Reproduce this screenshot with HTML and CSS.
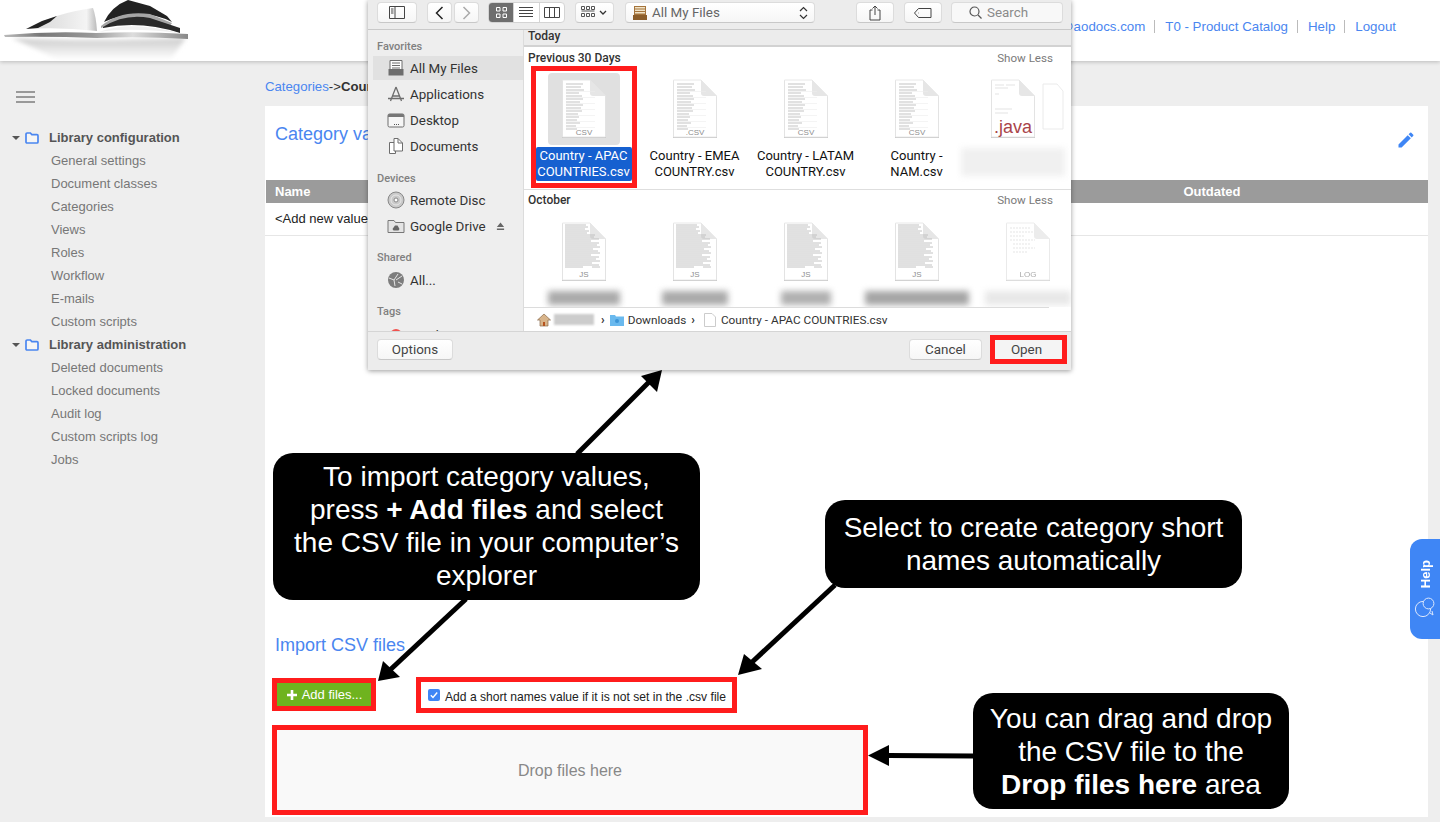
FILE: index.html
```html
<!DOCTYPE html>
<html lang="en">
<head>
<meta charset="utf-8">
<title>Import CSV files</title>
<link rel="stylesheet" href="styles.css">
</head>
<body>
<svg class="defs" width="0" height="0" aria-hidden="true">
  <defs>
    <symbol id="doc" viewBox="0 0 46 59">
      <path d="M1 2H29L45 18V59H1Z" fill="#c9c9c9"/>
      <path d="M1.500 1H29L44.500 17V58H1.500Z" fill="#fff" stroke="#e2e2e2" stroke-width=".8"/>
      <path d="M29 1L45 17H32Q29 17 29 14Z" fill="#e6e6e6"/>
    </symbol>
    <symbol id="lines-csv" viewBox="0 0 46 59">
      <path d="M5 5H22M5 8H20M5 11H23M5 14H18M5 17H21M5 20H22M5 23H19M5 26H22M5 29H20M5 32H21M5 35H17M5 38H18M5 41H16M5 44H19M5 47H15M5 50H16" stroke="#b4b4b4" stroke-width=".8"/>
      <path d="M5 12.500H34M5 18.500H34M5 24.500H34M5 30.500H34M5 36.500H34M5 42.500H34M5 48.500H34" stroke="#ececec" stroke-width=".6"/>
    </symbol>
    <symbol id="lines-js" viewBox="0 0 46 59">
      <path d="M4 3H25M4 5H27M4 7H24M4 9H28M4 11H26M4 13H34M4 15H33M4 17H38M4 19H30M4 21H38M4 23H36M4 25H39M4 27H32M4 29H37M4 31H39M4 33H30M4 35H38M4 37H35M4 39H39M4 41H31M4 43H38M4 45H22M31 45H39" stroke="#bbb" stroke-width=".9"/>
    </symbol>
    <symbol id="folder" viewBox="0 0 14 12">
      <path d="M1 2.200Q1 1 2.200 1H5.400L6.800 2.600H12Q13 2.600 13 3.700V10Q13 11 12 11H2Q1 11 1 10Z" fill="#fff" fill-opacity=".4" stroke="#4a86f0" stroke-width="1.700"/>
    </symbol>
  </defs>
</svg>

<header class="topbar">
  <svg class="logo" viewBox="0 0 190 61" aria-hidden="true">
    <defs>
      <linearGradient id="lp" x1="0" y1="0" x2="1" y2="0"><stop offset="0" stop-color="#d8d8d8"/><stop offset=".5" stop-color="#e6e6e6"/><stop offset=".85" stop-color="#f4f4f4"/><stop offset="1" stop-color="#bbb"/></linearGradient>
      <linearGradient id="bs" x1="0" y1="0" x2="1" y2="0"><stop offset="0" stop-color="#bbb"/><stop offset=".2" stop-color="#777"/><stop offset=".48" stop-color="#999"/><stop offset=".7" stop-color="#ddd"/><stop offset="1" stop-color="#888"/></linearGradient>
      <linearGradient id="rf" x1="0" y1="0" x2="0" y2="1"><stop offset="0" stop-color="#ccc"/><stop offset="1" stop-color="#fff"/></linearGradient>
      <filter id="soft"><feGaussianBlur stdDeviation=".5"/></filter>
      <filter id="softer"><feGaussianBlur stdDeviation="2"/></filter>
    </defs>
    <path d="M12 38Q90 42 186 38L170 60H60Z" fill="url(#rf)" filter="url(#softer)"/>
    <g filter="url(#soft)">
      <path d="M27 29Q55 13 93 8Q96 16 97 31Q60 27 27 29Z" fill="url(#lp)"/>
      <path d="M26 29L42 21L57 16L50 22L38 28Z" fill="#222"/>
      <path d="M104 22Q112 6 128 0L150 6L167 16L172 22Q140 6 104 22Z" fill="#222"/>
      <path d="M101 26Q120 10 150 14L172 23L170 26Q135 12 101 28Z" fill="#a5a5a5"/>
      <path d="M103 27Q125 13 150 18L180 28L180 33Q140 20 103 28Z" fill="#2a2a2a"/>
      <path d="M99 32Q130 20 179 33Q130 27 99 32Z" fill="#f0f0f0"/>
      <path d="M4 35Q50 31 96 33Q140 31 188 34L188 39Q140 36 97 38Q50 36 5 37Z" fill="url(#bs)"/>
    </g>
  </svg>
  <nav class="toplinks">
    <a>someone@aodocs.com</a><i></i><a>T0 - Product Catalog</a><i></i><a>Help</a><i></i><a>Logout</a>
  </nav>
</header>

<div class="layout">
  <aside class="sidebar">
    <div class="burger"><b></b><b></b><b></b></div>
    <div class="treehead"><span class="caret"></span><svg class="tfolder"><use href="#folder"/></svg><strong>Library configuration</strong></div>
    <a class="treeitem">General settings</a>
    <a class="treeitem">Document classes</a>
    <a class="treeitem">Categories</a>
    <a class="treeitem">Views</a>
    <a class="treeitem">Roles</a>
    <a class="treeitem">Workflow</a>
    <a class="treeitem">E-mails</a>
    <a class="treeitem">Custom scripts</a>
    <div class="treehead"><span class="caret"></span><svg class="tfolder"><use href="#folder"/></svg><strong>Library administration</strong></div>
    <a class="treeitem">Deleted documents</a>
    <a class="treeitem">Locked documents</a>
    <a class="treeitem">Audit log</a>
    <a class="treeitem">Custom scripts log</a>
    <a class="treeitem">Jobs</a>
  </aside>

  <main class="content">
    <div class="crumbs"><a>Categories</a>-&gt;<strong>Country</strong></div>
    <section class="card">
      <div class="cardhead">
        <h2 class="blue-title">Category values</h2>
        <svg class="pen" viewBox="0 0 24 24" aria-hidden="true"><path d="M3 17.250V21h3.750L17.810 9.940l-3.750-3.750L3 17.250zM20.710 7.040a1 1 0 0 0 0-1.410l-2.340-2.340a1 1 0 0 0-1.410 0l-1.830 1.830 3.750 3.750 1.830-1.830z"/></svg>
      </div>
      <div class="thead"><span>Name</span><span class="th-out">Outdated</span></div>
      <div class="trow">&lt;Add new value&gt;</div>

      <div class="importer">
        <h2 class="blue-title import-title">Import CSV files</h2>
        <div class="actions">
          <div class="redbox addwrap"><button class="addbtn"><svg viewBox="0 0 12 12" aria-hidden="true"><path d="M6 1V11M1 6H11" stroke="#fff" stroke-width="2.600"/></svg>Add files...</button></div>
          <label class="redbox checkwrap"><span class="check"><svg viewBox="0 0 12 12" aria-hidden="true"><path d="M2.800 6.200L5 8.500L9.200 3.500" fill="none" stroke="#fff" stroke-width="1.400"/></svg></span><span>Add a short names value if it is not set in the .csv file</span></label>
        </div>
        <div class="redbox dropzone">Drop files here</div>
      </div>
    </section>
  </main>
</div>

<div class="helptab">
  <span>Help</span>
  <svg viewBox="0 0 22 22" aria-hidden="true"><circle cx="9" cy="13" r="7.600" fill="none" stroke="#dce8fd" stroke-width="1"/><circle cx="14.500" cy="7.500" r="5.400" fill="#3f86f5" stroke="#dce8fd" stroke-width="1"/><path d="M16 17l3 2-1-4" fill="none" stroke="#dce8fd" stroke-width="1"/></svg>
</div>

<!-- macOS file picker -->
<div class="dialog">
  <div class="mac-toolbar">
    <button class="mbtn w40"><svg width="16" height="13" viewBox="0 0 16 13"><path d="M.5.5h15v12H.5zM6 .5v12M2 3h2.500M2 5h2.500M2 7h2.500" fill="none" stroke="#444"/></svg></button>
    <button class="mbtn w25 ml10"><svg width="9" height="14" viewBox="0 0 9 14"><path d="M7.500 1L1.500 7L7.500 13" fill="none" stroke="#222" stroke-width="1.500"/></svg></button>
    <button class="mbtn w25 ml2"><svg width="9" height="14" viewBox="0 0 9 14"><path d="M1.500 1L7.500 7L1.500 13" fill="none" stroke="#aaa" stroke-width="1.500"/></svg></button>
    <div class="seg ml9">
      <span class="on"><svg width="11" height="11" viewBox="0 0 11 11"><path d="M.5.5h3.500v3.500H.5zM7 .5h3.500v3.500H7zM.5 7h3.500v3.500H.5zM7 7h3.500v3.500H7z" fill="none" stroke="#fff"/></svg></span>
      <span><svg width="14" height="11" viewBox="0 0 14 11"><path d="M0 .5h14M0 3.500h14M0 6.500h14M0 9.500h14" stroke="#444"/></svg></span>
      <span><svg width="16" height="11" viewBox="0 0 16 11"><path d="M.5.5h15v10H.5zM5.500.5v10M10.500.5v10" fill="none" stroke="#444"/></svg></span>
    </div>
    <button class="mbtn w39 ml10"><svg width="27" height="13" viewBox="0 0 27 13"><path d="M.5.5h3v3h-3zM5.500.5h3v3h-3zM10.500.5h3v3h-3zM.5 5h13M.5 7.500h3v3h-3zM5.500 7.500h3v3h-3zM10.500 7.500h3v3h-3z" fill="none" stroke="#555"/><path d="M19 5l3 3 3-3" fill="none" stroke="#333" stroke-width="1.300"/></svg></button>
    <button class="mbtn popup ml11">
      <svg width="16" height="16" viewBox="0 0 16 16"><path d="M2 1h12v11H2z" fill="#a5743c"/><path d="M3 2h10v1.500H3zM3 4.500h10v1.500H3zM3 7h10v1.500H3z" fill="#f1e4c8"/><path d="M1 10h14v5H1z" fill="#8b5d2a"/></svg>
      <span>All My Files</span>
      <svg class="updown" width="9" height="14" viewBox="0 0 9 14"><path d="M1 5l3.500-3.500L8 5M1 9l3.500 3.500L8 9" fill="none" stroke="#333" stroke-width="1.200"/></svg>
    </button>
    <button class="mbtn w38 ml41"><svg width="12" height="16" viewBox="0 0 12 16"><path d="M3.500 5H1v10h10V5H8.500M6 10V1M3.500 3.500L6 1l2.500 2.500" fill="none" stroke="#444"/></svg></button>
    <button class="mbtn w38 ml10"><svg width="18" height="10" viewBox="0 0 18 10"><path d="M4.500.5H17v9H4.500L.5 5zM4 5h.5" fill="none" stroke="#444"/></svg></button>
    <div class="search ml9"><svg width="13" height="13" viewBox="0 0 13 13"><circle cx="5.500" cy="5.500" r="4.500" fill="none" stroke="#555" stroke-width="1.200"/><path d="M9 9l3.500 3.500" stroke="#555" stroke-width="1.200"/></svg><span>Search</span></div>
  </div>

  <div class="mac-body">
    <nav class="mac-side">
      <div class="sidehead first">Favorites</div>
      <div class="sideitem selected"><svg viewBox="0 0 18 18"><path d="M3 1.500h12v9H3z" fill="#fff" stroke="#6d6d6d"/><path d="M5 4h8M5 6.500h8M5 9h8" stroke="#6d6d6d"/><path d="M1.500 10h15v6.500h-15z" fill="#6d6d6d"/></svg>All My Files</div>
      <div class="sideitem"><svg viewBox="0 0 18 18"><path d="M9 2L3.500 16M9 2L14.500 16M5 11h8M1 13.500h16" fill="none" stroke="#6d6d6d" stroke-width="1.300"/></svg>Applications</div>
      <div class="sideitem"><svg viewBox="0 0 18 18"><rect x="1" y="3" width="16" height="13" rx="1.500" fill="#f6f6f6" stroke="#6d6d6d"/><path d="M1 4.500Q1 3 2.500 3h13Q17 3 17 4.500V6H1z" fill="#777"/><path d="M7 13.500h1M9 13.500h1M11 13.500h1" stroke="#555"/></svg>Desktop</div>
      <div class="sideitem"><svg viewBox="0 0 18 18"><path d="M2.500 5.500h6v11h-6z" fill="#fff" stroke="#6d6d6d"/><path d="M7 1.500h4l4.500 4.500v8H7z" fill="#fff" stroke="#6d6d6d"/><path d="M11 1.500V6h4.500" fill="none" stroke="#6d6d6d"/></svg>Documents</div>
      <div class="sidehead devices">Devices</div>
      <div class="sideitem"><svg viewBox="0 0 18 18"><circle cx="9" cy="9" r="8" fill="#c9c9c9" stroke="#888"/><circle cx="9" cy="9" r="5" fill="none" stroke="#e8e8e8"/><circle cx="9" cy="9" r="2" fill="#fff" stroke="#888"/></svg>Remote Disc</div>
      <div class="sideitem drive"><svg viewBox="0 0 18 18"><path d="M1 3.500h6l1.500 2H17v10H1z" fill="#e4e4e4" stroke="#777"/><path d="M8 8.500h2.500l2 3.500-1 1.500H6.500l-1-1.500z" fill="#666"/></svg>Google Drive<svg class="eject" viewBox="0 0 10 9"><path d="M5 0l4 5H1zM1 6.800h8V8.500H1z" fill="#666"/></svg></div>
      <div class="sidehead shared">Shared</div>
      <div class="sideitem"><svg viewBox="0 0 18 18"><circle cx="9" cy="9" r="8" fill="#7d7d7d"/><path d="M2 7l5 2 1 6M9 9l6-4M7 9l4-6M11 11l4 2" fill="none" stroke="#e5e5e5"/></svg>All...</div>
      <div class="sidehead tags">Tags</div>
      <div class="sideitem tagred"><span class="dot"></span>Red</div>
    </nav>

    <div class="mac-main">
      <div class="strip">Today</div>
      <div class="files">
        <section class="group g1">
          <div class="grouphead"><span>Previous 30 Days</span><em>Show Less</em></div>
          <div class="grid">
            <figure class="file sel">
              <div class="tile"><svg class="docicon"><use href="#doc"/><use href="#lines-csv"/><text x="23" y="56">CSV</text></svg></div>
              <figcaption>Country - APAC COUNTRIES.csv</figcaption>
            </figure>
            <figure class="file">
              <div class="tile"><svg class="docicon"><use href="#doc"/><use href="#lines-csv"/><text x="23" y="56">.CSV</text></svg></div>
              <figcaption>Country - EMEA COUNTRY.csv</figcaption>
            </figure>
            <figure class="file">
              <div class="tile"><svg class="docicon"><use href="#doc"/><use href="#lines-csv"/><text x="23" y="56">CSV</text></svg></div>
              <figcaption>Country - LATAM COUNTRY.csv</figcaption>
            </figure>
            <figure class="file">
              <div class="tile"><svg class="docicon"><use href="#doc"/><use href="#lines-csv"/><text x="23" y="56">CSV</text></svg></div>
              <figcaption class="narrow">Country - NAM.csv</figcaption>
            </figure>
            <figure class="file">
              <div class="tile javatile">
                <svg class="docicon ghost" viewBox="0 0 46 59"><path d="M2 5H16L22 12V50H2Z" fill="#fff" stroke="#e6e6e6"/></svg>
                <svg class="docicon"><use href="#doc"/><path d="M5 6H14M5 9H18M16 6H25M5 15H9M5 30H22M5 34H18" stroke="#e3e3e3"/><text class="java" x="23" y="54">.java</text></svg>
              </div>
              <div class="blurred b-java"></div>
            </figure>
          </div>
        </section>
        <section class="group g2">
          <div class="grouphead"><span>October</span><em>Show Less</em></div>
          <div class="grid">
            <figure class="file"><div class="tile t2"><svg class="docicon"><use href="#doc"/><use href="#lines-js"/><text x="23" y="55">JS</text></svg></div><div class="blurred b1"></div></figure>
            <figure class="file"><div class="tile t2"><svg class="docicon"><use href="#doc"/><use href="#lines-js"/><text x="23" y="55">JS</text></svg></div><div class="blurred b2"></div></figure>
            <figure class="file"><div class="tile t2"><svg class="docicon"><use href="#doc"/><use href="#lines-js"/><text x="23" y="55">JS</text></svg></div><div class="blurred b3"></div></figure>
            <figure class="file"><div class="tile t2"><svg class="docicon"><use href="#doc"/><use href="#lines-js"/><text x="23" y="55">JS</text></svg></div><div class="blurred b4"></div></figure>
            <figure class="file"><div class="tile t2"><svg class="docicon faint"><use href="#doc"/><path d="M5 6H25M5 10H28M5 14H20M5 18H30M8 22H25M8 26H30M8 30H22" stroke="#ddd" stroke-dasharray="2 1"/><text x="23" y="55">LOG</text></svg></div><div class="blurred b5"></div></figure>
          </div>
        </section>
      </div>
      <div class="pathbar">
        <svg width="14" height="14" viewBox="0 0 14 14"><path d="M7 1L.5 7H3v6h8V7h2.500z" fill="#d8b48a" stroke="#8a6a4a" stroke-width=".7"/><path d="M6 9h2v4H6z" fill="#b5531f"/></svg>
        <span class="blurname"></span>
        <span class="chev">›</span>
        <svg class="pfolder" width="14" height="12" viewBox="0 0 14 12"><path d="M0 1h5l1 1.500h8V12H0z" fill="#6ab9ee"/><circle cx="7" cy="7" r="2" fill="#3d95d6"/></svg>
        <span>Downloads</span>
        <span class="chev">›</span>
        <svg class="pdoc" width="12" height="14" viewBox="0 0 12 14"><path d="M.5.500H8L11.500 4V13.500H.5z" fill="#fff" stroke="#ccc"/></svg>
        <span>Country - APAC COUNTRIES.csv</span>
      </div>
    </div>
  </div>

  <div class="mac-foot">
    <button class="mbtn options">Options</button>
    <button class="mbtn cancel">Cancel</button>
    <button class="mbtn open">Open</button>
  </div>
  <div class="redbox fileflag"></div>
  <div class="redbox openflag"></div>
</div>

<!-- annotations -->
<svg class="arrows" viewBox="0 0 1440 822" aria-hidden="true">
  <g stroke="#000" stroke-width="5" fill="#000">
    <path d="M577 454L650 381"/>
    <path d="M662 370L641 376L657 392Z" stroke="none"/>
    <path d="M466 599L390 670"/>
    <path d="M378 681L383 661L400 677Z" stroke="none"/>
    <path d="M835 585L750 664"/>
    <path d="M738 675L744 654L762 669Z" stroke="none"/>
    <path d="M973 756L888 755.500"/>
    <path d="M868 755.500L889 745L889 766Z" stroke="none"/>
  </g>
</svg>
<div class="callout c1"><p>To import category values,<br>press <b>+ Add files</b> and select<br>the CSV file in your computer’s<br>explorer</p></div>
<div class="callout c2"><p>Select to create category short<br>names automatically</p></div>
<div class="callout c3"><p>You can drag and drop<br>the CSV file to the<br><b>Drop files here</b> area</p></div>
</body>
</html>
```
FILE: styles.css
```css
* { box-sizing: border-box; }
html, body { margin: 0; height: 100%; }
body {
  position: relative;
  width: 1440px;
  height: 822px;
  overflow: hidden;
  background: #eeeeee;
  font-family: "Liberation Sans", Arial, sans-serif;
  font-size: 13px;
  color: #222;
  display: flex;
  flex-direction: column;
}
.defs { position: absolute; }
a { color: #4a86f0; text-decoration: none; }

/* header */
.topbar {
  flex: none;
  height: 61px;
  background: #fff;
  box-shadow: 0 1px 4px rgba(0,0,0,.22);
  display: flex;
  justify-content: space-between;
  position: relative;
  z-index: 1;
}
.logo { width: 190px; height: 61px; }
.toplinks {
  display: flex;
  align-items: center;
  height: 52px;
  padding-right: 44px;
  font-size: 13.3px;
}
.toplinks i {
  width: 1px;
  height: 13px;
  margin: 0 10px 0 9px;
  background: #bbb;
}

/* layout */
.layout { flex: 1; display: flex; min-height: 0; }
.sidebar { width: 265px; flex: none; padding-top: 30px; }
.burger { margin-left: 16px; width: 19px; height: 12px; display: flex; flex-direction: column; justify-content: space-between; margin-bottom: 23px; }
.burger b { display: block; height: 2px; background: #999; }
.treehead { display: flex; align-items: center; height: 23px; color: #555; }
.treehead strong { font-size: 13px; margin-left: 10px; }
.caret { margin-left: 12px; width: 0; height: 0; border: 4px solid transparent; border-top: 4px solid #555; border-bottom: 0; }
.tfolder { width: 14px; height: 12px; margin-left: 5px; }
.treeitem { display: block; height: 23px; line-height: 23px; margin-left: 51px; color: #777; }

/* main */
.content { flex: 1; padding-right: 12px; display: flex; flex-direction: column; min-width: 0; }
.crumbs { height: 45px; padding-top: 18px; line-height: 16px; color: #333; font-size: 13.2px; }
.card { flex: 1; margin-bottom: 5px; background: #fff; display: flex; flex-direction: column; }
.cardhead { height: 74px; padding: 17px 12px 0 10px; display: flex; justify-content: space-between; }
.blue-title { margin: 0; font-size: 18px; font-weight: 400; line-height: 22px; color: #4a86f0; }
.pen { width: 20px; height: 20px; fill: #3f86f5; margin-top: 7px; }
.thead { height: 23px; margin-left: 1px; padding-left: 9px; background: #9b9b9b; color: #fff; font-weight: 700; line-height: 23px; display: flex; }
.th-out { margin-left: 873px; }
.trow { height: 33px; padding-left: 10px; line-height: 31px; border-bottom: 1px solid #e6e6e6; color: #222; }
.importer { margin-top: auto; padding: 0 0 2px 7px; }
.import-title { margin-left: 3px; margin-bottom: 21px; }
.actions { display: flex; align-items: flex-start; margin-bottom: 12px; height: 36px; }
.redbox { border: 5px solid #ff1c1c; }
.addwrap { width: 104px; height: 33px; margin-top: 1px; }
.addbtn { width: 100%; height: 100%; border: 0; padding: 0; background: #6fb31f; color: #fff; font: 13px "Liberation Sans", Arial, sans-serif; display: flex; align-items: center; justify-content: center; gap: 4px; }
.addbtn svg { width: 12px; height: 12px; }
.checkwrap { margin-left: 40px; width: 321px; height: 36px; display: flex; align-items: center; padding: 4px 0 0 7px; font-size: 12.1px; color: #222; gap: 5px; }
.check { width: 12px; height: 12px; border-radius: 2px; background: #3f86f5; display: block; flex: none; margin-top: -4px; }
.check svg { display: block; }
.dropzone { width: 596px; height: 90px; padding-top: 2px; background: #f9f9f9; color: #888; font-size: 16px; display: flex; align-items: center; justify-content: center; }

/* help tab */
.helptab {
  position: absolute; right: 0; top: 539px; width: 30px; height: 100px;
  background: #3f86f5; border-radius: 12px 0 0 12px;
  display: flex; flex-direction: column; align-items: center; justify-content: center; gap: 7px;
  color: #fff; font-weight: 700; font-size: 13px;
}
.helptab span { writing-mode: vertical-rl; transform: rotate(180deg); }
.helptab svg { width: 22px; height: 22px; }

/* dialog */
.dialog {
  position: absolute; left: 368px; top: 0; width: 703px; height: 370px;
  background: #ececec;
  box-shadow: 0 1px 5px rgba(0,0,0,.4);
  font-family: Roboto, "Liberation Sans", sans-serif;
  font-size: 13.4px;
  color: #333;
  display: flex; flex-direction: column;
  z-index: 3;
}
.mac-toolbar { flex: none; height: 30px; padding: 2px 0 0 9px; display: flex; align-items: flex-start; border-bottom: 1px solid #c9c9c9; }
.mbtn { height: 21px; padding: 0; background: linear-gradient(#fff,#f6f6f6); border: 1px solid #dcdcdc; border-bottom-color: #c8c8c8; border-radius: 4px; display: flex; align-items: center; justify-content: center; font: inherit; color: #444; }
.w40 { width: 40px; } .w25 { width: 25px; } .w39 { width: 39px; } .w38 { width: 38px; }
.ml2 { margin-left: 2px; } .ml9 { margin-left: 9px; } .ml10 { margin-left: 10px; } .ml11 { margin-left: 11px; } .ml41 { margin-left: 41px; }
.seg { display: flex; width: 77px; height: 21px; border: 1px solid #d4d4d4; border-radius: 4px; overflow: hidden; background: #fff; }
.seg span { flex: 1; display: flex; align-items: center; justify-content: center; border-left: 1px solid #d4d4d4; }
.seg span.on { background: #6e6e6e; border: 0; }
.popup { width: 190px; justify-content: flex-start; padding: 0 6px; gap: 4px; color: #666; }
.popup span { flex: 1; text-align: left; }
.search { width: 112px; height: 21px; border: 1px solid #dcdcdc; border-bottom-color: #c8c8c8; border-radius: 4px; background: #f8f8f8; display: flex; align-items: center; gap: 5px; padding-left: 17px; color: #8a8a8a; }

.mac-body { flex: none; height: 301px; display: flex; }
.mac-side { width: 156px; flex: none; background: #eeeeee; border-right: 1px solid #dcdcdc; overflow: hidden; }
.sidehead { font-size: 11px; font-weight: 500; color: #808080; padding-left: 9px; line-height: 14px; }
.sidehead.first { margin-top: 10px; }
.sidehead.devices { margin-top: 13px; margin-bottom: 1px; }
.sidehead.shared { margin-top: 12px; margin-bottom: 2px; }
.sidehead.tags { margin-top: 12px; }
.sideitem { height: 26px; display: flex; align-items: center; padding-left: 19px; gap: 5px; color: #333; }
.sideitem > svg:first-child { width: 18px; height: 18px; }
.sideitem.selected { height: 24px; margin: 2px 0 0 5px; padding-left: 14px; background: #e1e1e1; }
.sideitem.selected + .sideitem { margin-top: 1px; }
.eject { width: 9px; height: 9px; margin-left: 5px; }
.dot { width: 12px; height: 12px; border-radius: 50%; background: #f0524f; margin: 0 9px 0 3px; }
.tagred { margin-top: 3px; }

.mac-main { flex: 1; min-width: 0; background: #fff; display: flex; flex-direction: column; overflow: hidden; }
.strip { flex: none; height: 17px; background: #ececec; border-bottom: 2px solid #d2d2d2; padding-left: 4px; font-size: 12px; font-weight: 500; line-height: 12px; color: #333; }
.files { flex: 1; min-height: 0; overflow: hidden; }
.group { overflow: hidden; }
.g1 { height: 143px; border-bottom: 1px solid #dedede; }
.g2 { height: 117px; }
.grouphead { display: flex; justify-content: space-between; padding: 5px 18px 0 4px; font-size: 12px; line-height: 13px; color: #333; font-weight: 500; }
.g2 .grouphead { padding-top: 4px; }
.grouphead em { font-style: normal; font-weight: 400; font-size: 11.6px; color: #7a7a7a; }
.grid { display: grid; grid-template-columns: repeat(5, 111px); padding-left: 4px; margin-top: 8px; }
.g2 .grid { margin-top: 10px; }
.file { margin: 0; display: flex; flex-direction: column; align-items: center; position: relative; }
.tile { width: 72px; height: 72px; border-radius: 4px; padding-top: 6px; display: flex; justify-content: center; }
.t2 { height: 69px; padding-top: 5px; }
.file.sel .tile { background: #e0e0e0; }
.docicon { width: 46px; height: 59px; flex: none; }
.docicon text { font: 8px "Liberation Sans", Arial, sans-serif; fill: #8e8e8e; text-anchor: middle; }
.docicon text.java { font-size: 18px; fill: #a9444a; }
.faint { opacity: .75; }
.javatile { position: relative; transform: translateX(-15px); }
.ghost { position: absolute; left: 64px; top: 6px; opacity: .8; }
figcaption { width: 110px; margin-top: 2px; padding-top: 1px; font-size: 13px; line-height: 16px; color: #111; text-align: center; }
figcaption.narrow { width: 62px; }
.sel figcaption { background: #1660d0; color: #fff; border-radius: 2px; width: 96px; padding-bottom: 1px; }
.blurred { height: 14px; background: #b8b8b8; filter: blur(3px); margin-top: 5px; }
.b1 { width: 72px; background: #aaa; } .b2 { width: 66px; background: #aaa; } .b3 { width: 50px; background: #b0b0b0; } .b4 { width: 104px; background: #a5a5a5; } .b5 { width: 86px; background: #e8e8e8; }
.b-java { width: 104px; height: 28px; background: #f0f0f0; margin-top: 3px; transform: translateX(-15px); }

.pathbar { flex: none; height: 24px; margin-right: 22px; border-top: 1px solid #dcdcdc; display: flex; align-items: center; padding-left: 13px; font-size: 11.8px; color: #333; }
.blurname { width: 40px; height: 11px; background: #ccc; filter: blur(1px); margin: 0 2px 0 3px; }
.chev { font-weight: 700; margin: 0 5px; font-size: 12px; }
.pfolder { margin-right: 4px; }
.pdoc { margin: 0 5px 0 4px; }

.mac-foot { flex: 1; border-top: 1px solid #d5d5d5; background: #ececec; display: flex; align-items: flex-start; padding: 7px 5px 0 9px; gap: 9px; color: #444; }
.options { width: 76px; }
.cancel { width: 73px; margin-left: auto; }
.open { width: 71px; margin-right: 4px; border: 0; background: #f4f4f4; }
.fileflag { position: absolute; left: 163px; top: 66px; width: 106px; height: 122px; }
.openflag { position: absolute; left: 622px; top: 335px; width: 77px; height: 29px; }

/* annotations */
.arrows { position: absolute; inset: 0; width: 1440px; height: 822px; z-index: 4; }
.callout {
  position: absolute; z-index: 5;
  background: #000; color: #fff;
  border-radius: 20px;
  font-size: 28px; line-height: 33px;
  text-align: center;
  display: flex; align-items: center; justify-content: center;
}
.callout p { margin: 0; }
.c1 { left: 273px; top: 453px; width: 427px; height: 147px; padding-bottom: 2px; }
.c2 { left: 825px; top: 500px; width: 417px; height: 88px; }
.c3 { left: 973px; top: 693px; width: 316px; height: 116px; }
```
